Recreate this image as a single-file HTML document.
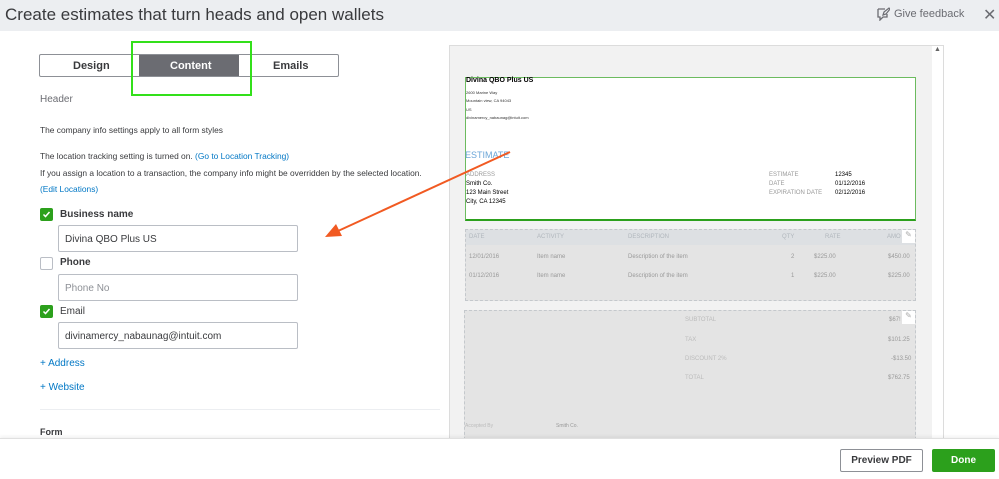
<!DOCTYPE html>
<html><head><style>
*{box-sizing:border-box;margin:0;padding:0}
body{width:999px;height:479px;overflow:hidden;background:#fff;font-family:"Liberation Sans",sans-serif;position:relative;color:#393a3d}
.a{position:absolute}
.hdr{left:0;top:0;width:999px;height:31px;background:#eceef1}
.t9{font-size:8.4px}
.lk{color:#0077c5}
.cb{width:13px;height:13px;border-radius:2px;background:#2ca01c;left:40px}
.cbo{width:13px;height:13px;border-radius:2px;border:1px solid #babec5;left:40px;background:#fff}
.inp{left:58px;width:240px;height:27px;border:1px solid #babec5;border-radius:2px;font-size:10px;padding:8px 6px;color:#393a3d}
.lbl{left:60px;font-size:10px;font-weight:bold;color:#393a3d}
.sm{font-size:4px;color:#333}
.g{color:#999;font-size:6px}
.b{color:#000;font-size:6px}
</style></head><body>
<div class="a hdr"></div>
<div class="a" style="left:5px;top:5px;font-size:17px;color:#393a3d">Create estimates that turn heads and open wallets</div>
<svg class="a" style="left:876px;top:7px" width="14" height="14" viewBox="0 0 14 14"><path d="M2 2h7M2 2v8h2v3l3-3h4V7" fill="none" stroke="#6b6c72" stroke-width="1.3"/><path d="M7 8l1-3 5-4 1 1-4 5z" fill="none" stroke="#6b6c72" stroke-width="1.2"/></svg>
<div class="a" style="left:894px;top:8px;font-size:11px;color:#6b6c72">Give feedback</div>
<div class="a" style="left:983px;top:5px;font-size:16px;color:#6b6c72">✕</div>

<div class="a" style="left:39px;top:54px;width:300px;height:23px;border:1px solid #8d9096;border-radius:2px"></div>
<div class="a" style="left:139px;top:55px;width:100px;height:21px;background:#6b6c72"></div>
<div class="a" style="left:73px;top:60px;font-size:11px;font-weight:bold">Design</div>
<div class="a" style="left:170px;top:60px;font-size:11px;font-weight:bold;color:#fff">Content</div>
<div class="a" style="left:273px;top:60px;font-size:11px;font-weight:bold">Emails</div>
<div class="a" style="left:131px;top:41px;width:121px;height:55px;border:2px solid #33e01a"></div>

<div class="a" style="left:40px;top:94px;font-size:10px;color:#6b6c72">Header</div>
<div class="a t9" style="left:40px;top:125px">The company info settings apply to all form styles</div>
<div class="a t9" style="left:40px;top:151px">The location tracking setting is turned on. <span class="lk">(Go to Location Tracking)</span></div>
<div class="a t9" style="left:40px;top:168px">If you assign a location to a transaction, the company info might be overridden by the selected location.</div>
<div class="a t9" style="left:40px;top:184px"><span class="lk">(Edit Locations)</span></div>

<div class="a cb" style="top:208px"></div><svg class="a" style="left:40px;top:208px" width="13" height="13"><path d="M3.5 6.5l2 2 4-4.5" fill="none" stroke="#fff" stroke-width="1.5"/></svg>
<div class="a lbl" style="top:209px">Business name</div>
<div class="a inp" style="top:225px">Divina QBO Plus US</div>
<div class="a cbo" style="top:257px"></div>
<div class="a lbl" style="top:257px">Phone</div>
<div class="a inp" style="top:274px;color:#8d9096">Phone No</div>
<div class="a cb" style="top:305px"></div><svg class="a" style="left:40px;top:305px" width="13" height="13"><path d="M3.5 6.5l2 2 4-4.5" fill="none" stroke="#fff" stroke-width="1.5"/></svg>
<div class="a lbl" style="top:306px;font-weight:normal">Email</div>
<div class="a inp" style="top:322px">divinamercy_nabaunag@intuit.com</div>
<div class="a lk" style="left:40px;top:358px;font-size:10px">+ Address</div>
<div class="a lk" style="left:40px;top:382px;font-size:10px">+ Website</div>
<div class="a" style="left:40px;top:409px;width:400px;height:1px;background:#eceef1"></div>
<div class="a" style="left:40px;top:427px;font-size:9px;font-weight:bold">Form</div>

<!-- preview -->
<div class="a" style="left:449px;top:45px;width:495px;height:400px;background:#f2f2f2;border:1px solid #dcdcdc"></div>
<div class="a" style="left:932px;top:46px;width:11px;height:400px;background:#fff"></div>
<div class="a" style="left:934px;top:46px;font-size:7px;color:#666">▲</div>
<div class="a" style="left:465px;top:77px;width:451px;height:144px;background:#fff;border:1px solid #6cbb5f;border-bottom:2px solid #2ca01c"></div>
<div class="a" style="left:466px;top:77px;font-size:7px;font-weight:bold;color:#000">Divina QBO Plus US</div>
<div class="a sm" style="left:466px;top:90px">2600 Marine Way</div>
<div class="a sm" style="left:466px;top:98px">Mountain view, CA 94043</div>
<div class="a sm" style="left:466px;top:107px">US</div>
<div class="a sm" style="left:466px;top:115px">divinamercy_nabaunag@intuit.com</div>
<div class="a" style="left:465px;top:150px;font-size:9px;color:#6ba6d8">ESTIMATE</div>
<div class="a g" style="left:466px;top:172px">ADDRESS</div>
<div class="a b" style="left:466px;top:181px">Smith Co.</div>
<div class="a b" style="left:466px;top:190px">123 Main Street</div>
<div class="a b" style="left:466px;top:199px">City, CA 12345</div>
<div class="a g" style="left:769px;top:172px">ESTIMATE</div>
<div class="a g" style="left:769px;top:181px">DATE</div>
<div class="a g" style="left:769px;top:190px">EXPIRATION DATE</div>
<div class="a b" style="left:835px;top:172px">12345</div>
<div class="a b" style="left:835px;top:181px">01/12/2016</div>
<div class="a b" style="left:835px;top:190px">02/12/2016</div>

<div class="a" style="left:465px;top:229px;width:451px;height:72px;background:#e4e4e4;border:1px dashed #c4c8cc"></div>
<div class="a" style="left:466px;top:230px;width:449px;height:15px;background:#dde0e3"></div>
<div class="a" style="left:902px;top:230px;width:13px;height:13px;background:#fff;font-size:8px;color:#aaa;text-align:center">✎</div>
<div class="a g" style="left:469px;top:234px;color:#b0b6bc">DATE</div>
<div class="a g" style="left:537px;top:234px;color:#b0b6bc">ACTIVITY</div>
<div class="a g" style="left:628px;top:234px;color:#b0b6bc">DESCRIPTION</div>
<div class="a g" style="left:782px;top:234px;color:#b0b6bc">QTY</div>
<div class="a g" style="left:825px;top:234px;color:#b0b6bc">RATE</div>
<div class="a g" style="left:887px;top:234px;color:#b0b6bc">AMO</div>
<div class="a g" style="left:469px;top:254px">12/01/2016</div><div class="a g" style="left:537px;top:254px">Item name</div><div class="a g" style="left:628px;top:254px">Description of the item</div><div class="a g" style="left:791px;top:254px">2</div><div class="a g" style="left:814px;top:254px">$225.00</div><div class="a g" style="left:888px;top:254px">$450.00</div>
<div class="a g" style="left:469px;top:273px">01/12/2016</div><div class="a g" style="left:537px;top:273px">Item name</div><div class="a g" style="left:628px;top:273px">Description of the item</div><div class="a g" style="left:791px;top:273px">1</div><div class="a g" style="left:814px;top:273px">$225.00</div><div class="a g" style="left:888px;top:273px">$225.00</div>

<div class="a" style="left:464px;top:310px;width:452px;height:135px;background:#e4e4e4;border:1px dashed #c4c8cc"></div>
<div class="a" style="left:902px;top:311px;width:13px;height:13px;background:#fff;font-size:8px;color:#aaa;text-align:center">✎</div>
<div class="a g" style="left:685px;top:317px;color:#bbb">SUBTOTAL</div><div class="a g" style="left:889px;top:317px">$67!</div>
<div class="a g" style="left:685px;top:337px;color:#bbb">TAX</div><div class="a g" style="left:888px;top:337px">$101.25</div>
<div class="a g" style="left:685px;top:356px;color:#bbb">DISCOUNT 2%</div><div class="a g" style="left:891px;top:356px">-$13.50</div>
<div class="a g" style="left:685px;top:375px;color:#bbb">TOTAL</div><div class="a g" style="left:888px;top:375px">$762.75</div>
<div class="a g" style="left:465px;top:423px;color:#bbb;font-size:5px">Accepted By</div>
<div class="a g" style="left:556px;top:423px;font-size:5px">Smith Co.</div>

<svg class="a" style="left:0;top:0" width="999" height="479"><line x1="510" y1="152" x2="338" y2="231" stroke="#f15a22" stroke-width="2"/><polygon points="325,237 336,224 342,236" fill="#f15a22"/></svg>

<!-- footer -->
<div class="a" style="left:0;top:438px;width:999px;height:41px;background:#fff;border-top:1px solid #e0e0e0;box-shadow:0 -2px 3px rgba(0,0,0,.05)"></div>
<div class="a" style="left:840px;top:449px;width:83px;height:23px;border:1px solid #8d9096;border-radius:2px;font-size:10px;font-weight:bold;text-align:center;line-height:21px">Preview PDF</div>
<div class="a" style="left:932px;top:449px;width:63px;height:23px;background:#2ca01c;border-radius:2px;font-size:10px;font-weight:bold;text-align:center;line-height:23px;color:#fff">Done</div>
</body></html>
